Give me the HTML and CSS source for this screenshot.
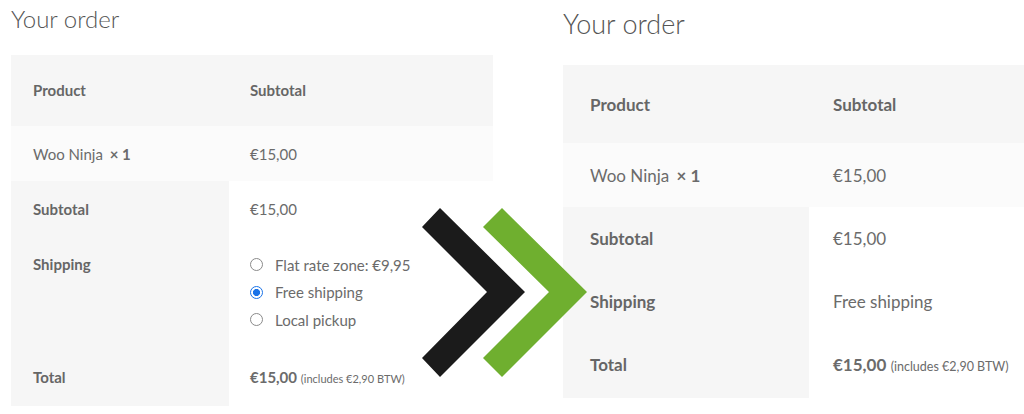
FILE: index.html
```html
<!DOCTYPE html>
<html lang="en">
<head>
<meta charset="utf-8">
<title>Your order – before and after</title>
<link rel="stylesheet" href="styles.css">
</head>
<body>
<main class="compare">
  <section class="panel panel-before">
    <h2 class="title">Your order</h2>
    <table class="order">
      <thead>
        <tr class="row-head"><th>Product</th><th>Subtotal</th></tr>
      </thead>
      <tbody>
        <tr class="row-item"><td>Woo Ninja <strong class="qty">× 1</strong></td><td>€15,00</td></tr>
      </tbody>
      <tfoot>
        <tr><th>Subtotal</th><td>€15,00</td></tr>
        <tr class="row-shipping">
          <th>Shipping</th>
          <td>
            <ul class="methods">
              <li><span class="radio"></span>Flat rate zone: €9,95</li>
              <li><span class="radio radio-on"></span>Free shipping</li>
              <li><span class="radio"></span>Local pickup</li>
            </ul>
          </td>
        </tr>
        <tr><th>Total</th><td><strong>€15,00</strong> <small class="tax">(includes €2,90 BTW)</small></td></tr>
      </tfoot>
    </table>
  </section>

  <section class="panel panel-after">
    <h2 class="title">Your order</h2>
    <table class="order">
      <thead>
        <tr class="row-head"><th>Product</th><th>Subtotal</th></tr>
      </thead>
      <tbody>
        <tr class="row-item"><td>Woo Ninja <strong class="qty">× 1</strong></td><td>€15,00</td></tr>
      </tbody>
      <tfoot>
        <tr><th>Subtotal</th><td>€15,00</td></tr>
        <tr><th>Shipping</th><td>Free shipping</td></tr>
        <tr><th>Total</th><td><strong>€15,00</strong> <small class="tax">(includes €2,90 BTW)</small></td></tr>
      </tfoot>
    </table>
  </section>

  <svg class="arrows" width="1024" height="414" viewBox="0 0 1024 414" aria-hidden="true">
    <polygon class="arrow-black" points="440,208 525,292 440,377 422,358 487,292 422,227"/>
    <polygon class="arrow-green" points="502,208 587,292 502,377 483,358 549,292 483,227"/>
  </svg>
</main>
</body>
</html>
```

FILE: styles.css
```css
html, body {
  margin: 0;
  padding: 0;
  background: #ffffff;
}

body {
  width: 1024px;
  height: 414px;
  overflow: hidden;
  font-family: "Lato", "Open Sans", sans-serif;
  color: #6b6b6b;
}

.compare {
  position: relative;
  display: flex;
  align-items: flex-start;
  width: 1024px;
  height: 414px;
  overflow: hidden;
}

.panel {
  flex: none;
}

.title {
  margin: 0;
  font-weight: 300;
  color: #555555;
}

.order {
  border-collapse: collapse;
  border-spacing: 0;
  table-layout: fixed;
}

.order th,
.order td {
  text-align: left;
  vertical-align: top;
  padding: 0;
}

.order th {
  font-weight: 700;
  color: #666666;
}

.order td {
  font-weight: 400;
}

.row-head th {
  background: #f6f6f6;
}

.row-item td {
  background: #fbfbfb;
}

.order tfoot th {
  background: #f6f6f6;
}

.order tfoot td {
  background: #ffffff;
}

.qty {
  font-weight: 700;
  margin-left: 3px;
}

.tax {
  font-weight: 400;
}

/* ---------- before (left) ---------- */
.panel-before {
  margin-left: 11px;
  width: 482px;
}

.panel-before .title {
  font-size: 24px;
  line-height: 30px;
  margin-top: 4px;
  margin-bottom: 21px;
}

.panel-before .order {
  width: 482px;
  font-size: 15px;
  line-height: 24px;
}

.panel-before .order th:first-child,
.panel-before .order td:first-child {
  width: 218px;
  box-sizing: border-box;
  padding-left: 22px;
}

.panel-before .order th,
.panel-before .order td {
  padding-top: 16px;
  padding-bottom: 15px;
}

.panel-before .order th + th,
.panel-before .order th + td,
.panel-before .order td + td {
  padding-left: 21px;
}

.panel-before .row-head th {
  padding-top: 23px;
  padding-bottom: 24px;
}

.panel-before .tax {
  font-size: 11px;
}

.methods {
  list-style: none;
  margin: 0;
  padding: 0;
}

.methods li {
  display: flex;
  align-items: center;
  height: 27.5px;
}

.panel-before .row-shipping td {
  padding-top: 15px;
  padding-bottom: 15px;
}

.radio {
  flex: none;
  box-sizing: border-box;
  width: 13px;
  height: 13px;
  border: 1px solid #8a8a8a;
  border-radius: 50%;
  margin-right: 12px;
  background: #ffffff;
}

.radio-on {
  border: 1px solid #1a73e8;
  background: radial-gradient(circle, #1a73e8 0 3.3px, #ffffff 3.8px);
}

/* ---------- after (right) ---------- */
.panel-after {
  margin-left: 70px;
  width: 461px;
}

.panel-after .title {
  font-size: 27px;
  line-height: 34px;
  margin-top: 7px;
  margin-bottom: 24px;
}

.panel-after .order {
  width: 461px;
  font-size: 17px;
  line-height: 27px;
}

.panel-after .order th:first-child,
.panel-after .order td:first-child {
  width: 246px;
  box-sizing: border-box;
  padding-left: 27px;
}

.panel-after .order th,
.panel-after .order td {
  padding-top: 18px;
  padding-bottom: 18px;
}

.panel-after .order th + th,
.panel-after .order th + td,
.panel-after .order td + td {
  padding-left: 24px;
}

.panel-after .row-head th {
  padding-top: 26px;
  padding-bottom: 25px;
}

.panel-after .row-item td {
  padding-top: 19px;
  padding-bottom: 18px;
}

.panel-after .tax {
  font-size: 12.5px;
}

/* ---------- arrows overlay ---------- */
.arrows {
  position: absolute;
  left: 0;
  top: 0;
  pointer-events: none;
}

.arrow-black {
  fill: #1b1b1b;
}

.arrow-green {
  fill: #6faf2f;
}
```
